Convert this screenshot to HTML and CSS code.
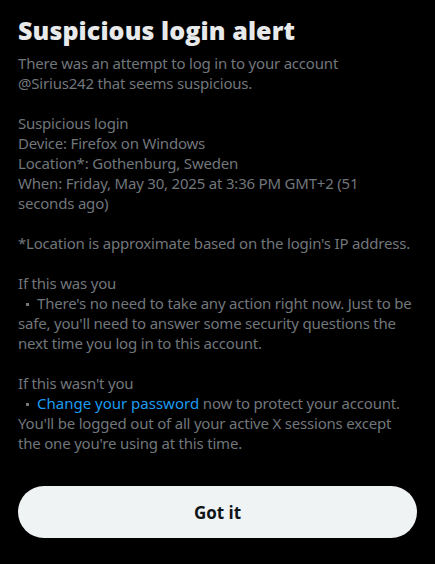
FILE: index.html
```html
<!DOCTYPE html>
<html lang="en">
<head>
<meta charset="utf-8">
<title>Suspicious login alert</title>
<link rel="stylesheet" href="styles.css">
</head>
<body>
<main class="sheet">
  <h1 class="title">Suspicious login alert</h1>
  <div class="message">
    <p class="para">There was an attempt to log in to your account @Sirius242 that seems suspicious.</p>
    <p class="para">Suspicious login<br>Device: Firefox on Windows<br>Location*: Gothenburg, Sweden<br>When: Friday, May 30, 2025 at 3:36 PM GMT+2 (51 seconds ago)</p>
    <p class="para">*Location is approximate based on the login's IP address.</p>
    <p class="para">If this was you<br><span class="bullet"></span>There's no need to take any action right now. Just to be safe, you'll need to answer some security questions the next time you log in to this account.</p>
    <p class="para">If this wasn't you<br><span class="bullet"></span><a class="link" href="#">Change your password</a><span class="after"> now to protect your account. You'll be logged out of all your active X sessions except the one you're using at this time.</span></p>
  </div>
  <button class="btn" type="button">Got it</button>
</main>
</body>
</html>
```
FILE: styles.css
```css
html, body {
  margin: 0;
  padding: 0;
  background: #000;
}
.sheet {
  display: flex;
  flex-direction: column;
  padding: 16px 18px 26px;
  font-family: "Noto Sans", "Open Sans", sans-serif;
}
.title {
  margin: 0;
  color: #e7e9ea;
  font-family: "Open Sans", "Noto Sans", sans-serif;
  font-weight: 800;
  font-size: 25px;
  line-height: 28px;
  letter-spacing: 0.1px;
}
.message {
  margin-top: 9px;
  display: flex;
  flex-direction: column;
  gap: 20px;
}
.para {
  margin: 0;
  color: #71767b;
  font-size: 15px;
  line-height: 20px;
  letter-spacing: -0.2px;
}
.bullet {
  display: inline-block;
  width: 3px;
  height: 3px;
  margin: 0 8px;
  background: #71767b;
  vertical-align: middle;
}
.link {
  color: #1d9bf0;
  text-decoration: none;
  letter-spacing: 0;
}
.btn {
  margin-top: 33px;
  height: 52px;
  border: none;
  border-radius: 9999px;
  background: #eff3f4;
  color: #0f1419;
  font-family: "Open Sans", "Noto Sans", sans-serif;
  font-weight: 700;
  font-size: 17px;
  cursor: pointer;
}
```
